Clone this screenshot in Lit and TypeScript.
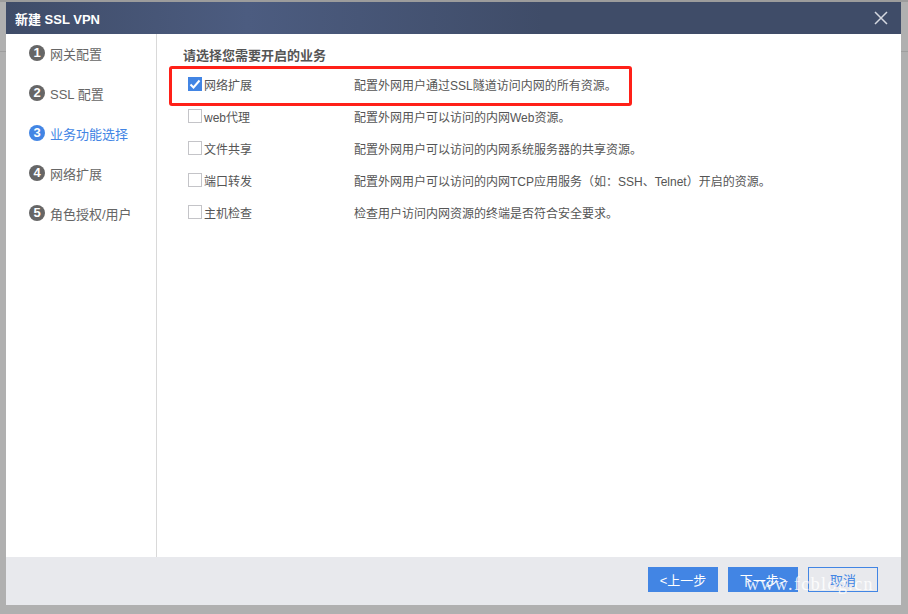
import { LitElement, css, html } from "lit";
import { customElement } from "lit/decorators.js";

const STEPS = ["网关配置", "SSL 配置", "业务功能选择", "网络扩展", "角色授权/用户"];
const ACTIVE_STEP = 2;

const SERVICES = [
  { name: "网络扩展", desc: "配置外网用户通过SSL隧道访问内网的所有资源。", checked: true },
  { name: "web代理", desc: "配置外网用户可以访问的内网Web资源。", checked: false },
  { name: "文件共享", desc: "配置外网用户可以访问的内网系统服务器的共享资源。", checked: false },
  { name: "端口转发", desc: "配置外网用户可以访问的内网TCP应用服务（如：SSH、Telnet）开启的资源。", checked: false },
  { name: "主机检查", desc: "检查用户访问内网资源的终端是否符合安全要求。", checked: false }
];

@customElement("app-root")
export class AppRoot extends LitElement {
  static override styles = css`
    :host {
      display: block;
      width: 908px;
      height: 614px;
      overflow: hidden;
      position: relative;
      background: #b0b0b0;
      font-family: "Liberation Sans", "Noto Sans CJK SC", sans-serif;
      font-size: 12px;
      color: #555;
    }

    .backdrop {
      position: absolute;
      inset: 0;
    }

    .backdrop .top-line {
      position: absolute;
      left: 0;
      top: 0;
      width: 100%;
      height: 2px;
      background: #9c9c9c;
    }

    .backdrop .rule {
      position: absolute;
      left: 0;
      top: 51px;
      width: 100%;
      height: 1px;
      background: #9e9e9e;
    }

    .dialog {
      position: absolute;
      left: 6px;
      top: 2px;
      width: 895px;
      height: 603px;
      display: flex;
      flex-direction: column;
      background: #fff;
    }

    .header {
      height: 32px;
      flex: none;
      display: flex;
      align-items: center;
      justify-content: space-between;
      padding: 0 13px 0 9px;
      background: linear-gradient(90deg, #3f4c68 0%, #4c5c80 27%, #3f4c68 60%, #3f4c68 100%);
      color: #fff;
      font-size: 13px;
      font-weight: 700;
    }

    .close {
      display: block;
      width: 14px;
      height: 14px;
    }

    .body {
      flex: 1;
      display: flex;
      min-height: 0;
    }

    .steps {
      width: 151px;
      flex: none;
      box-sizing: border-box;
      border-right: 1px solid #d9d9d9;
      padding-top: 9px;
      display: flex;
      flex-direction: column;
      gap: 20px;
    }

    .step {
      height: 20px;
      display: flex;
      align-items: center;
      gap: 5px;
      padding-left: 23px;
      font-size: 13px;
      color: #666;
    }

    .step.active {
      color: #4285e4;
    }

    .badge {
      width: 16px;
      height: 16px;
      flex: none;
      border-radius: 50%;
      background: #666;
      color: #fff;
      font-size: 13px;
      font-weight: 700;
      line-height: 16px;
      text-align: center;
    }

    .active .badge {
      background: #4285e4;
    }

    .content {
      flex: 1;
      padding: 12px 0 0 26px;
    }

    .title {
      font-size: 13px;
      font-weight: 700;
      line-height: 20px;
      color: #555;
      margin-bottom: 2px;
    }

    .row {
      height: 32px;
      display: flex;
      align-items: center;
    }

    .check {
      width: 14px;
      height: 14px;
      flex: none;
      box-sizing: border-box;
      border: 1px solid #c4c4c8;
      background: #fff;
      margin-left: 5px;
      margin-right: 2px;
    }

    .check.on {
      border: none;
      background: #4285e4;
    }

    .check svg {
      display: block;
    }

    .name {
      width: 150px;
      flex: none;
      font-size: 12px;
      color: #555;
    }

    .desc {
      font-size: 12px;
      color: #555;
      white-space: nowrap;
    }

    .footer {
      height: 48px;
      flex: none;
      background: #e8e9ed;
      display: flex;
      justify-content: flex-end;
      align-items: flex-start;
      gap: 10px;
      padding: 10px 23px 0 0;
      box-sizing: border-box;
    }

    .btn {
      box-sizing: border-box;
      width: 70px;
      height: 25px;
      border: 1px solid #4285e4;
      background: #4285e4;
      color: #fff;
      font: inherit;
      font-size: 13px;
      padding: 0;
    }

    .btn.plain {
      background: transparent;
      color: #4285e4;
    }

    .highlight {
      position: absolute;
      left: 169px;
      top: 66px;
      width: 463px;
      height: 40px;
      box-sizing: border-box;
      border: 3px solid #ff2018;
      border-radius: 3px;
    }

    .watermark {
      position: absolute;
      left: 746px;
      top: 574px;
      font-family: "Liberation Serif", serif;
      font-size: 18px;
      letter-spacing: 1.4px;
      color: rgba(255, 255, 255, 0.85);
      white-space: nowrap;
    }
  `;

  override render() {
    return html`
      <div class="backdrop"><div class="top-line"></div><div class="rule"></div></div>
      <div class="dialog">
        <div class="header">
          <span>新建 SSL VPN</span>
          <svg class="close" viewBox="0 0 14 14" fill="none" stroke="#d5d8e0" stroke-width="1.5">
            <path d="M1 1l12 12M13 1L1 13" />
          </svg>
        </div>
        <div class="body">
          <div class="steps">
            ${STEPS.map((label, i) => html`
              <div class="step ${i === ACTIVE_STEP ? "active" : ""}">
                <span class="badge">${i + 1}</span><span>${label}</span>
              </div>
            `)}
          </div>
          <div class="content">
            <div class="title">请选择您需要开启的业务</div>
            ${SERVICES.map((s) => html`
              <div class="row">
                <span class="check ${s.checked ? "on" : ""}">
                  ${s.checked ? html`<svg width="14" height="14" viewBox="0 0 14 14" fill="none" stroke="#fff" stroke-width="2"><path d="M2.5 7.5l3 3 6-7" /></svg>` : ""}
                </span>
                <span class="name">${s.name}</span>
                <span class="desc">${s.desc}</span>
              </div>
            `)}
          </div>
        </div>
        <div class="footer">
          <button class="btn">&lt;上一步</button>
          <button class="btn">下一步&gt;</button>
          <button class="btn plain">取消</button>
        </div>
      </div>
      <div class="highlight"></div>
      <div class="watermark">www.fcblog.cn</div>
    `;
  }
}
